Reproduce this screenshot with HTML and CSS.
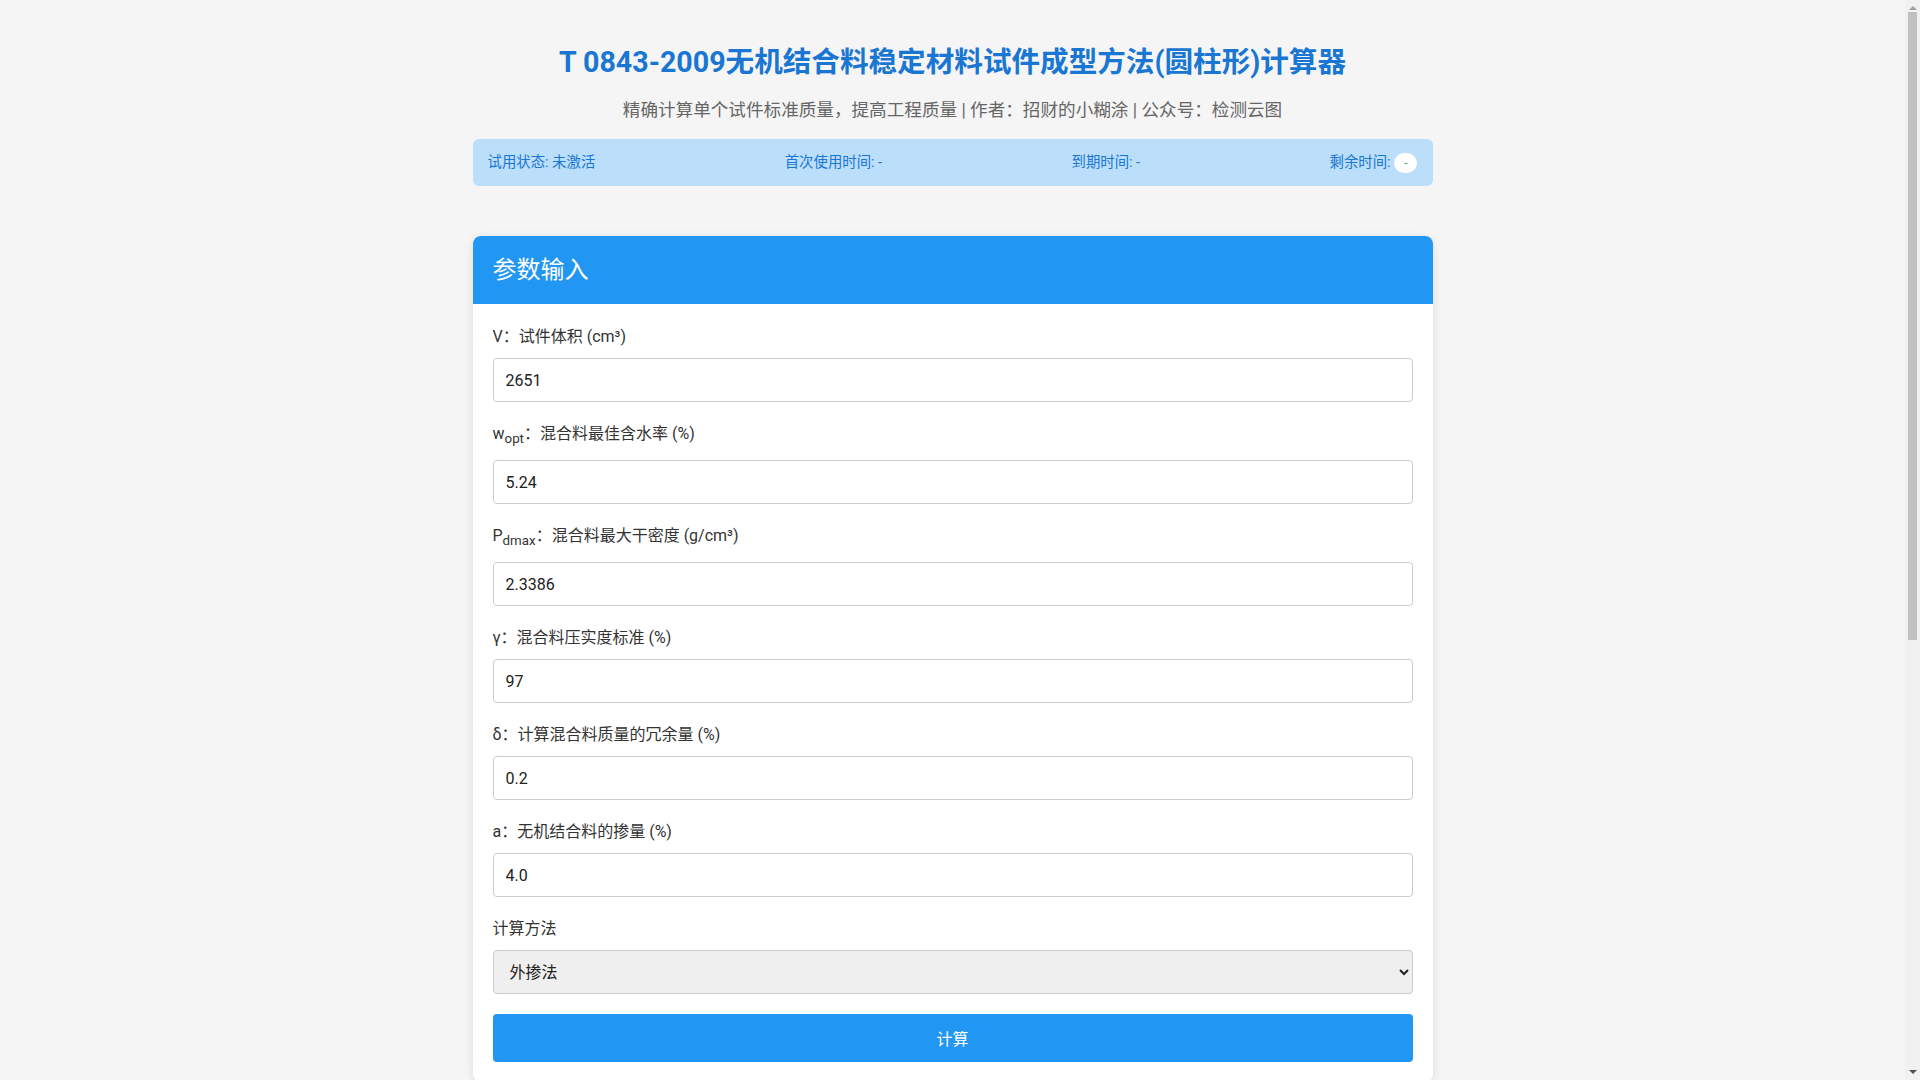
FILE: index.html
```html
<!DOCTYPE html>
<html lang="zh-CN">
<head>
    <meta charset="UTF-8">
    <meta name="viewport" content="width=device-width, initial-scale=1.0">
    <title>T 0843-2009无机结合料稳定材料试件成型方法(圆柱形)计算器</title>
    <link rel="stylesheet" href="styles.css">
</head>
<body>

    <div class="container">
        <div class="header">
            <h1>T 0843-2009无机结合料稳定材料试件成型方法(圆柱形)计算器</h1>
            <p class="subtitle">精确计算单个试件标准质量，提高工程质量 | 作者：招财的小糊涂 | 公众号：检测云图</p>
        </div>

        <div class="status-bar">
            <span>试用状态: 未激活</span>
            <span>首次使用时间: -</span>
            <span>到期时间: -</span>
            <span>剩余时间: <span class="badge">-</span></span>
        </div>

        <div class="card">
            <div class="card-header">
                <h2>参数输入</h2>
            </div>
            <div class="card-body">
                <div class="form-group">
                    <label for="v">V：试件体积 (cm³)</label>
                    <input type="number" id="v" value="2651">
                </div>
                <div class="form-group">
                    <label for="wopt">w<sub>opt</sub>：混合料最佳含水率 (%)</label>
                    <input type="number" id="wopt" value="5.24">
                </div>
                <div class="form-group">
                    <label for="pdmax">P<sub>dmax</sub>：混合料最大干密度 (g/cm³)</label>
                    <input type="number" id="pdmax" value="2.3386">
                </div>
                <div class="form-group">
                    <label for="gamma">γ：混合料压实度标准 (%)</label>
                    <input type="number" id="gamma" value="97">
                </div>
                <div class="form-group">
                    <label for="delta">δ：计算混合料质量的冗余量 (%)</label>
                    <input type="number" id="delta" value="0.2">
                </div>
                <div class="form-group">
                    <label for="a">a：无机结合料的掺量 (%)</label>
                    <input type="text" id="a" value="4.0">
                </div>
                <div class="form-group">
                    <label for="method">计算方法</label>
                    <select id="method">
                        <option>外掺法</option>
                        <option>内掺法</option>
                    </select>
                </div>
                <button class="btn" id="calc">计算</button>
            </div>
        </div>

        <div class="card">
            <div class="card-header">
                <h2>计算结果</h2>
            </div>
            <div class="card-body">
                <div class="result-row"><span>m<sub>0</sub>：单个试件标准质量 (g)</span><span class="value" id="m0">-</span></div>
                <div class="result-row"><span>m<sub>0</sub>'：考虑冗余后的混合料质量 (g)</span><span class="value" id="m0p">-</span></div>
                <div class="result-row"><span>m<sub>1</sub>：干混合料质量 (g)</span><span class="value" id="m1">-</span></div>
                <div class="result-row"><span>m<sub>2</sub>：无机结合料质量 (g)</span><span class="value" id="m2">-</span></div>
                <div class="result-row"><span>m<sub>3</sub>：干土质量 (g)</span><span class="value" id="m3">-</span></div>
                <div class="result-row"><span>m<sub>w</sub>：加水质量 (g)</span><span class="value" id="mw">-</span></div>
            </div>
        </div>

        <div class="card">
            <div class="card-header">
                <h2>计算说明</h2>
            </div>
            <div class="card-body notes">
                <p>m<sub>0</sub> = V × ρ<sub>dmax</sub> × (1 + w<sub>opt</sub>) × γ</p>
                <p>m<sub>0</sub>' = m<sub>0</sub> × (1 + δ)</p>
                <p>m<sub>1</sub> = m<sub>0</sub>' / (1 + w<sub>opt</sub>)</p>
                <p>外掺法：m<sub>2</sub> = m<sub>1</sub> × a / (1 + a)；内掺法：m<sub>2</sub> = m<sub>1</sub> × a</p>
            </div>
        </div>
    </div>

    <!-- 滚动条 -->
    <div class="scrollbar">
        <div class="sb-arrow up"></div>
        <div class="sb-thumb"></div>
        <div class="sb-arrow down"></div>
    </div>

    <script>
        // 计算单个试件各组分质量
        document.getElementById('calc').addEventListener('click', () => {
            let V = parseFloat(document.getElementById('v').value);
            let w = parseFloat(document.getElementById('wopt').value) / 100;
            let p = parseFloat(document.getElementById('pdmax').value);
            let g = parseFloat(document.getElementById('gamma').value) / 100;
            let d = parseFloat(document.getElementById('delta').value) / 100;
            let a = parseFloat(document.getElementById('a').value) / 100;
            let method = document.getElementById('method').value;

            let m0 = V * p * (1 + w) * g;
            let m0p = m0 * (1 + d);
            let m1 = m0p / (1 + w);
            let m2 = method === '外掺法' ? m1 * a / (1 + a) : m1 * a;
            let m3 = m1 - m2;
            let mw = m0p - m1;

            document.getElementById('m0').textContent = m0.toFixed(1);
            document.getElementById('m0p').textContent = m0p.toFixed(1);
            document.getElementById('m1').textContent = m1.toFixed(1);
            document.getElementById('m2').textContent = m2.toFixed(1);
            document.getElementById('m3').textContent = m3.toFixed(1);
            document.getElementById('mw').textContent = mw.toFixed(1);
        });
    </script>

</body>
</html>
```

FILE: styles.css
```css
html, body {
    margin: 0;
    padding: 0;
}

body {
    font-family: Roboto, "Noto Sans CJK SC", sans-serif;
    background-color: #f5f5f5;
    color: #333;
    padding-right: 15px; /* 滚动条宽度 */
}

.container {
    max-width: 960px;
    margin: 0 auto;
    padding: 20px 0 40px;
}

.header {
    text-align: center;
}

.header h1 {
    color: #1976d2;
    font-size: 28.6px;
    line-height: 36px;
    font-weight: bold;
    margin: 24px 0 17px;
}

.subtitle {
    color: #666;
    font-size: 17.6px;
    line-height: 26px;
    margin: 0 0 16px;
}

.status-bar {
    display: flex;
    justify-content: space-between;
    align-items: center;
    background-color: #bbdefb;
    color: #1976d2;
    font-size: 14.4px;
    line-height: 23px;
    padding: 12px 15px;
    border-radius: 6px;
    margin-bottom: 50px;
}

.badge {
    display: inline-block;
    background: white;
    color: #4caf50;
    font-size: 12px;
    line-height: 20px;
    padding: 0 10px;
    border-radius: 10px;
    vertical-align: middle;
}

.card {
    background: white;
    border-radius: 8px;
    box-shadow: 0 2px 10px rgba(0, 0, 0, 0.1);
    overflow: hidden;
    margin-bottom: 30px;
}

.card-header {
    background-color: #2196f3;
    color: white;
    padding: 20px;
}

.card-header h2 {
    margin: 0;
    font-size: 24px;
    line-height: 28px;
    font-weight: normal;
}

.card-body {
    padding: 21px 20px 20px;
}

.form-group {
    margin-bottom: 20px;
}

.form-group label {
    display: block;
    font-size: 16px;
    line-height: 24px;
    margin-bottom: 9px;
    color: #333;
}

.form-group input,
.form-group select {
    display: block;
    width: 100%;
    box-sizing: border-box;
    height: 44px;
    padding: 0 12px;
    font-size: 16px;
    font-family: Roboto, "Noto Sans CJK SC", sans-serif;
    color: #222;
    border: 1px solid #ccc;
    border-radius: 4px;
    background-color: white;
}

.form-group select {
    background-color: #efefef;
}

.btn {
    display: block;
    width: 100%;
    height: 48px;
    background-color: #2196f3;
    color: white;
    border: none;
    border-radius: 4px;
    font-size: 16px;
    font-family: Roboto, "Noto Sans CJK SC", sans-serif;
    cursor: pointer;
}

.btn:hover {
    background-color: #1976d2;
}

.result-row {
    display: flex;
    justify-content: space-between;
    padding: 14px 0;
    border-bottom: 1px solid #eee;
    font-size: 16px;
}

.result-row .value {
    color: #1976d2;
    font-weight: bold;
}

.notes p {
    margin: 0 0 12px;
    color: #555;
    font-size: 15px;
    line-height: 24px;
}

.scrollbar {
    position: fixed;
    top: 0;
    right: 0;
    bottom: 0;
    width: 15px;
    background: #f1f1f1;
    display: flex;
    flex-direction: column;
    align-items: center;
}

.sb-thumb {
    width: 9px;
    height: 628px;
    margin-top: 2px;
    background: #c1c1c1;
}

.sb-arrow {
    width: 0;
    height: 0;
    border-left: 4px solid transparent;
    border-right: 4px solid transparent;
}

.sb-arrow.up {
    border-bottom: 4px solid #a3a3a3;
    margin-top: 6px;
}

.sb-arrow.down {
    border-top: 4px solid #505050;
    margin-top: auto;
    margin-bottom: 6px;
}
```
